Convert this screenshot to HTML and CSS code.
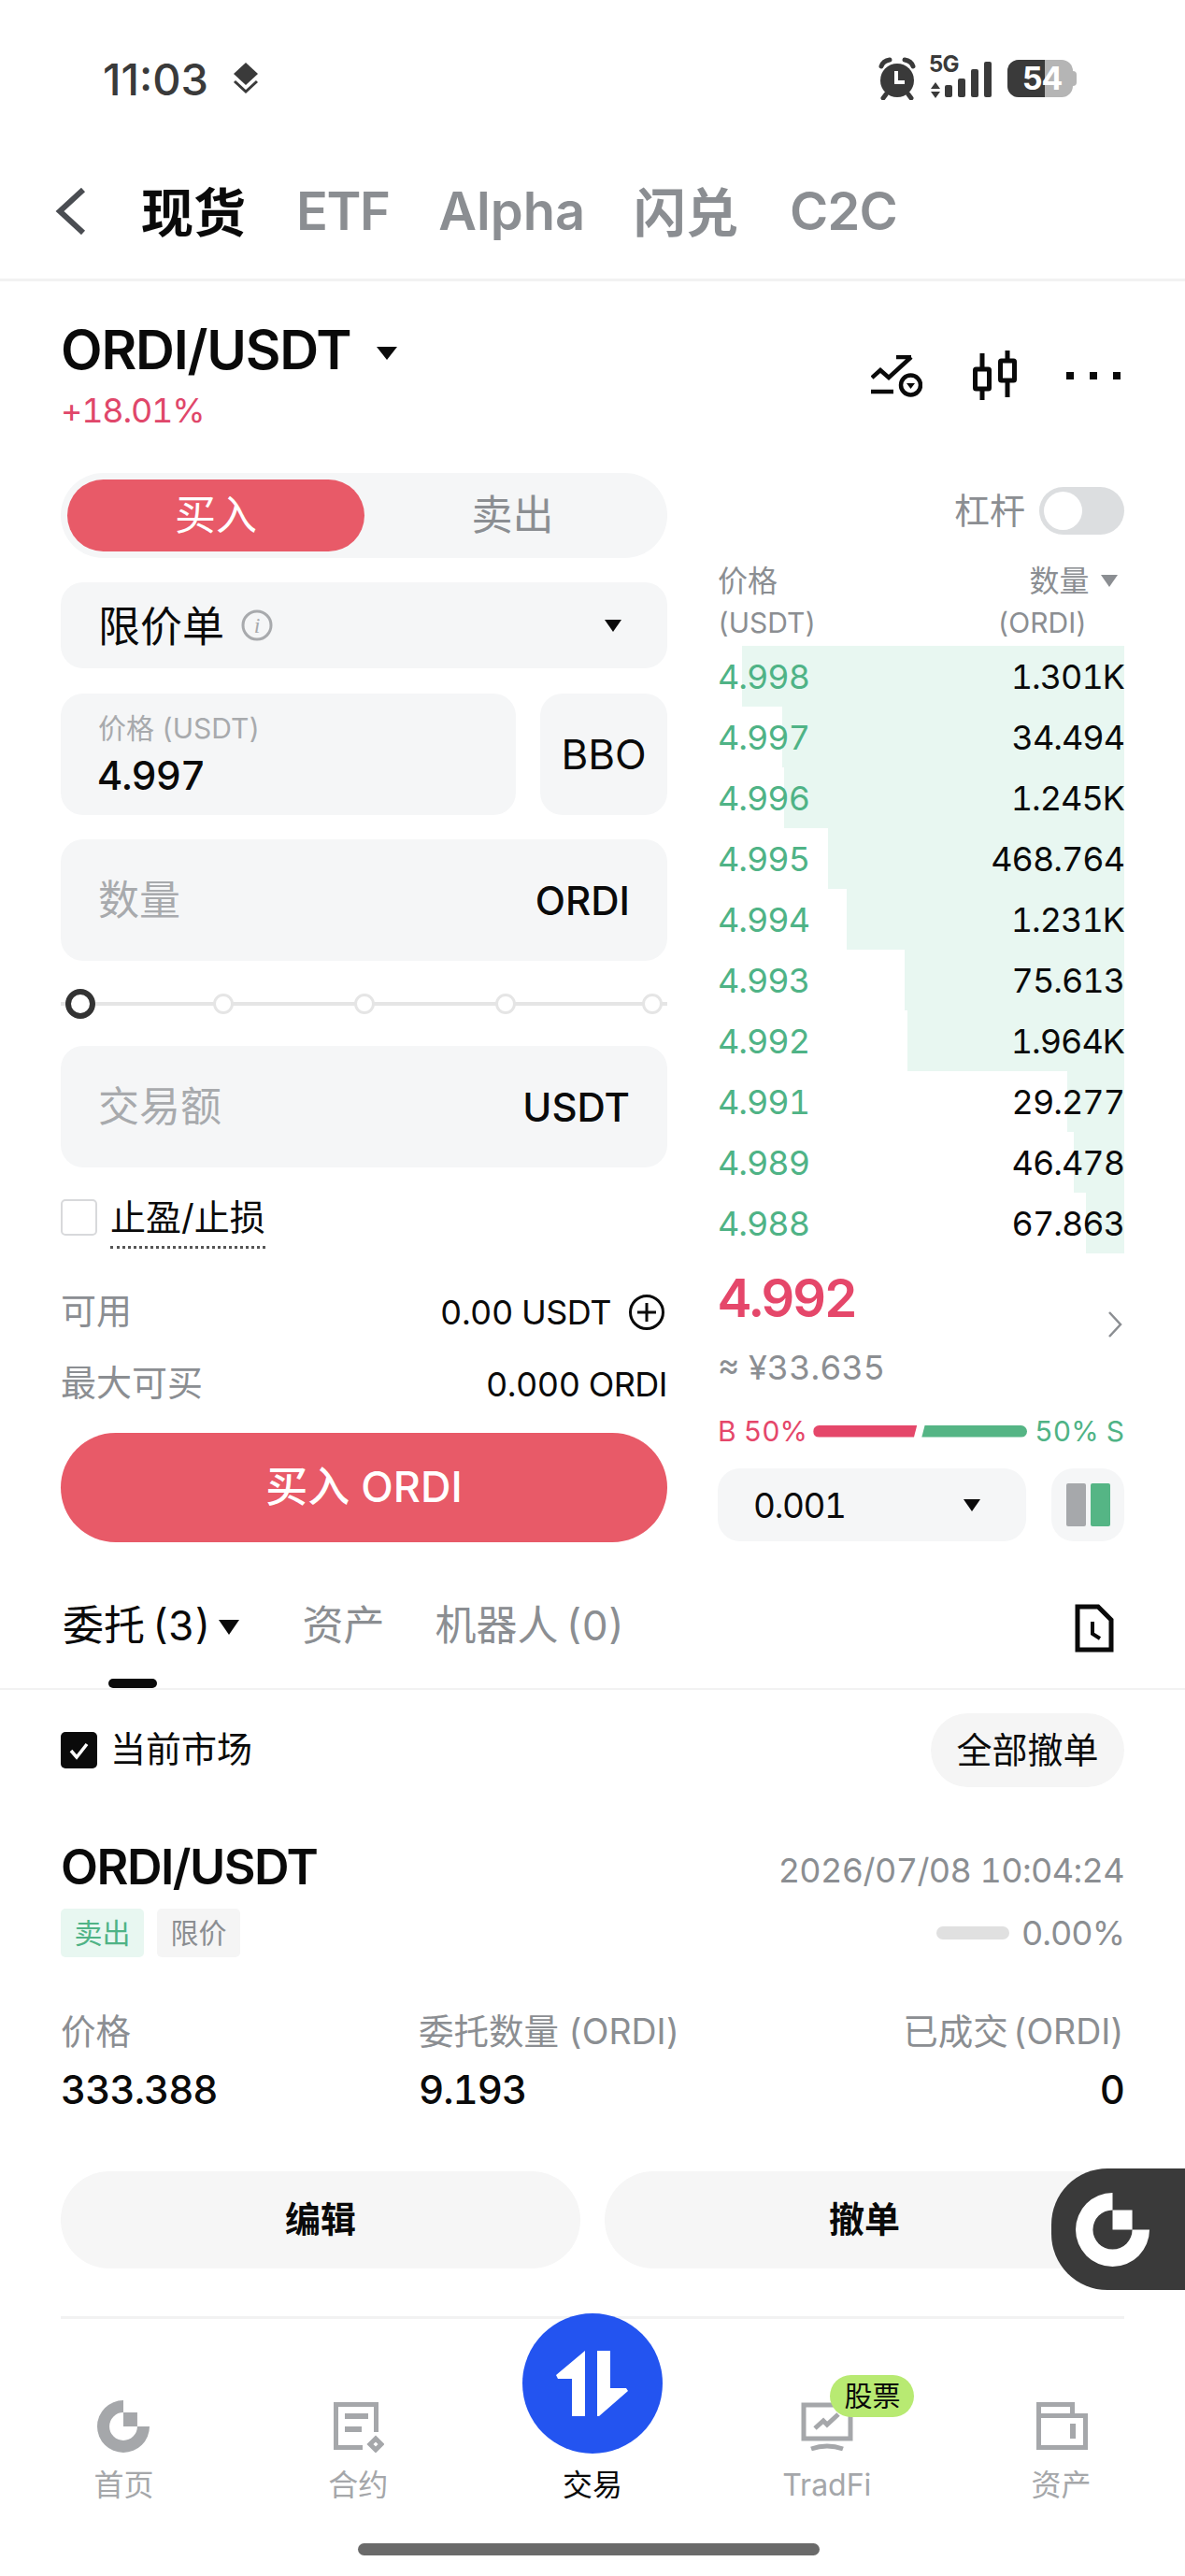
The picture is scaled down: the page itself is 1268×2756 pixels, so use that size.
FILE: index.html
```html
<!DOCTYPE html>
<html lang="zh-CN">

<head>
    <meta charset="UTF-8">
    <meta name="viewport" content="width=device-width, initial-scale=1.0">
    <title>ORDI/USDT 现货</title>
    <link rel="stylesheet" href="styles.css">
</head>

<body>
    <div class="page">
        <!-- Status bar -->
        <div class="status">
            <div class="status-left">
                <span class="clock">11:03</span>
                <svg class="layers" viewBox="0 0 32 34" width="32" height="34"><path fill="#3a3a3a" d="M16 0l13 12-13 12L3 12z"/><path fill="none" stroke="#3a3a3a" stroke-width="3" d="M4 20l12 11 12-11"/></svg>
            </div>
            <div class="status-right">
                <svg viewBox="0 0 40 46" width="40" height="46"><circle cx="20" cy="25" r="18" fill="#3a3a3a"/><path fill="none" stroke="#3a3a3a" stroke-width="5" stroke-linecap="round" d="M3 10q2-6 9-7M37 10q-2-6-9-7M8 40l-3 4M32 40l3 4"/><path fill="none" stroke="#fff" stroke-width="4" d="M19 15v12h9"/></svg>
                <div class="signal">
                    <span class="five-g">5G</span>
                    <svg viewBox="0 0 66 44" width="66" height="44"><path fill="#3a3a3a" d="M1 33l5-7 5 7zM1 36l5 7 5-7z"/><rect x="16" y="29" width="8" height="13" rx="2" fill="#3a3a3a"/><rect x="30" y="22" width="8" height="20" rx="2" fill="#3a3a3a"/><rect x="44" y="12" width="8" height="30" rx="2" fill="#3a3a3a"/><rect x="58" y="4" width="8" height="38" rx="2" fill="#3a3a3a"/></svg>
                </div>
                <div class="battery"><div class="battery-fill"></div><span class="battery-num">54</span></div>
            </div>
        </div>

        <!-- Top tabs -->
        <div class="topnav">
            <svg class="back" viewBox="0 0 34 50" width="34" height="50"><path fill="none" stroke="#4a4d52" stroke-width="6" d="M31 2L6 25l25 23"/></svg>
            <span class="topnav-item active">现货</span>
            <span class="topnav-item etf">ETF</span>
            <span class="topnav-item alpha">Alpha</span>
            <span class="topnav-item flash">闪兑</span>
            <span class="topnav-item c2c">C2C</span>
        </div>

        <!-- Pair header -->
        <div class="pair">
            <div>
                <div class="pair-name">ORDI/USDT <span class="caret pair-caret"></span></div>
                <div class="pair-change">+18.01%</div>
            </div>
            <div class="pair-icons">
                <svg viewBox="0 0 55 45" width="55" height="45" fill="none" stroke="#0a0a0a" stroke-width="4.5"><path d="M1 24l9-8 9 8L43 2M27 2h16M0 39h24"/><circle cx="42.5" cy="32" r="10.5"/><path fill="#0a0a0a" stroke="none" d="M38 30h9l-4.500 6z"/></svg>
                <svg viewBox="0 0 50 54" width="50" height="54" fill="none" stroke="#0a0a0a" stroke-width="5"><path d="M11 3v50M38 0v50"/><rect x="3.500" y="20" width="15" height="21" rx="1" fill="#fff"/><rect x="30.500" y="11" width="15" height="21" rx="1" fill="#fff"/></svg>
                <div class="dots"><i></i><i></i><i></i></div>
            </div>
        </div>

        <!-- Trade panel -->
        <div class="trade">
            <div class="form">
                <div class="side-toggle">
                    <div class="side active">买入</div>
                    <div class="side">卖出</div>
                </div>
                <div class="box type-box">
                    <span class="type-name">限价单</span>
                    <svg class="info" viewBox="0 0 34 34" width="34" height="34"><circle cx="17" cy="17" r="15" fill="none" stroke="#a8aaad" stroke-width="3"/><text x="17" y="25" text-anchor="middle" class="info-i">i</text></svg>
                    <span class="caret type-caret"></span>
                </div>
                <div class="price-row">
                    <div class="box price-box">
                        <div class="price-label">价格 (USDT)</div>
                        <div class="price-value">4.997</div>
                    </div>
                    <div class="box bbo">BBO</div>
                </div>
                <div class="box input-box">
                    <span class="placeholder">数量</span>
                    <span class="unit">ORDI</span>
                </div>
                <div class="slider">
                    <span class="knob"></span>
                    <span class="tick"></span>
                    <span class="tick"></span>
                    <span class="tick"></span>
                    <span class="tick"></span>
                </div>
                <div class="box input-box">
                    <span class="placeholder">交易额</span>
                    <span class="unit">USDT</span>
                </div>
                <div class="tp-row">
                    <span class="check-empty"></span>
                    <span class="tp-label">止盈/止损</span>
                </div>
                <div class="info-row avail">
                    <span class="muted">可用</span>
                    <span class="avail-val">0.00 USDT
                        <svg viewBox="0 0 40 40" width="40" height="40" fill="none" stroke="#0a0a0a" stroke-width="3"><circle cx="20" cy="20" r="17.500"/><path d="M20 10v20M10 20h20"/></svg>
                    </span>
                </div>
                <div class="info-row maxbuy">
                    <span class="muted">最大可买</span>
                    <span>0.000 ORDI</span>
                </div>
                <div class="buy-btn">买入 ORDI</div>
            </div>

            <div class="book">
                <div class="leverage">
                    <span class="leverage-label">杠杆</span>
                    <span class="switch"><i></i></span>
                </div>
                <div class="book-head">
                    <div>价格<br><small>(USDT)</small></div>
                    <div class="book-head-right">数量 <span class="caret head-caret"></span><br><small class="ordi-unit">(ORDI)</small></div>
                </div>
                <div class="row"><i class="depth" style="width:94%"></i><span class="bid">4.998</span><span>1.301K</span></div>
                <div class="row"><i class="depth" style="width:84.1%"></i><span class="bid">4.997</span><span>34.494</span></div>
                <div class="row"><i class="depth" style="width:83.7%"></i><span class="bid">4.996</span><span>1.245K</span></div>
                <div class="row"><i class="depth" style="width:72.9%"></i><span class="bid">4.995</span><span>468.764</span></div>
                <div class="row"><i class="depth" style="width:68.3%"></i><span class="bid">4.994</span><span>1.231K</span></div>
                <div class="row"><i class="depth" style="width:54%"></i><span class="bid">4.993</span><span>75.613</span></div>
                <div class="row"><i class="depth" style="width:53.3%"></i><span class="bid">4.992</span><span>1.964K</span></div>
                <div class="row"><i class="depth" style="width:14%"></i><span class="bid">4.991</span><span>29.277</span></div>
                <div class="row"><i class="depth" style="width:12.4%"></i><span class="bid">4.989</span><span>46.478</span></div>
                <div class="row"><i class="depth" style="width:9.4%"></i><span class="bid">4.988</span><span>67.863</span></div>
                <div class="last">
                    <div>
                        <div class="last-price">4.992</div>
                        <div class="last-cny">≈ ¥33.635</div>
                    </div>
                    <svg class="last-arrow" viewBox="0 0 18 30" width="18" height="30"><path fill="none" stroke="#8b8e92" stroke-width="2.500" d="M3 2l12 13L3 28"/></svg>
                </div>
                <div class="ratio">
                    <span class="ratio-b">B 50%</span>
                    <span class="bar-red"></span>
                    <span class="bar-green"></span>
                    <span class="ratio-s">50% S</span>
                </div>
                <div class="book-foot">
                    <div class="box step"><span>0.001</span><span class="caret step-caret"></span></div>
                    <div class="box layout-btn"><i class="col-gray"></i><i class="col-green"></i></div>
                </div>
            </div>
        </div>

        <!-- Orders -->
        <div class="tabs">
            <span class="tab active">委托 (3) <span class="caret tab-caret"></span><i class="tab-line"></i></span>
            <span class="tab assets-tab">资产</span>
            <span class="tab bot-tab">机器人 (0)</span>
            <svg class="history" viewBox="0 0 42 52" width="42" height="52" fill="none" stroke="#0a0a0a" stroke-width="5"><path d="M3 3h22l14 14v32H3z"/><path stroke-width="4" d="M19 19v13l8 5"/></svg>
        </div>
        <div class="market">
            <div class="market-left">
                <svg viewBox="0 0 39 39" width="39" height="39"><rect width="39" height="39" rx="5" fill="#0a0a0a"/><path fill="none" stroke="#fff" stroke-width="3.500" d="M11 20l6 7 11-14"/></svg>
                <span class="market-label">当前市场</span>
            </div>
            <div class="cancel-all">全部撤单</div>
        </div>
        <div class="order">
            <div class="order-top">
                <span class="order-pair">ORDI/USDT</span>
                <span class="muted order-date">2026/07/08 10:04:24</span>
            </div>
            <div class="order-sub">
                <div class="tags"><span class="tag tag-sell">卖出</span><span class="tag tag-type">限价</span></div>
                <div class="progress"><i></i><span class="muted">0.00%</span></div>
            </div>
            <div class="order-cols">
                <div><div class="muted col-label">价格</div><div class="col-val">333.388</div></div>
                <div><div class="muted col-label">委托数量 (ORDI)</div><div class="col-val">9.193</div></div>
                <div class="col-right"><div class="muted col-label">已成交 (ORDI)</div><div class="col-val">0</div></div>
            </div>
            <div class="order-btns">
                <div class="order-btn">编辑</div>
                <div class="order-btn">撤单</div>
            </div>
            <div class="divider"></div>
        </div>

        <!-- Floating logo -->
        <div class="float-logo">
            <svg viewBox="0 0 60 60" width="79" height="79"><path fill="#fff" d="M30 0A30 30 0 1 0 60 30H46A16 16 0 1 1 30 14zM30 14h16v16H30z"/></svg>
        </div>

        <!-- Bottom nav -->
        <div class="nav">
            <div class="nav-item">
                <svg viewBox="0 0 60 60" width="56" height="56"><path fill="#a5a7aa" d="M30 0A30 30 0 1 0 60 30H46A16 16 0 1 1 30 14zM30 14h16v16H30z"/></svg>
                <span>首页</span>
            </div>
            <div class="nav-item">
                <svg viewBox="0 0 56 56" width="56" height="56" fill="none" stroke="#a5a7aa" stroke-width="5"><path d="M33 50.500H4.500V4.500H47.500V34"/><path stroke-width="6" d="M14 17H39M14 31H32"/><path stroke-width="5" d="M47 41l6 6-6 6-6-6z"/></svg>
                <span>合约</span>
            </div>
            <div class="nav-item current">
                <div class="trade-fab">
                    <svg viewBox="0 0 77 70" width="77" height="70"><path fill="#fff" d="M31 0L0 26l2 4h15v40h14zM44 0h14v40h17l2 3-31 27h-2z"/></svg>
                </div>
                <span>交易</span>
            </div>
            <div class="nav-item">
                <span class="badge">股票</span>
                <svg viewBox="0 0 56 56" width="56" height="56" fill="none" stroke="#a5a7aa" stroke-width="5"><path d="M3 5h50v36H3z"/><path d="M11 52q17-6 34 0"/><path d="M15 30l9-8 4 4 12-11"/></svg>
                <span>TradFi</span>
            </div>
            <div class="nav-item">
                <svg viewBox="0 0 56 56" width="56" height="56" fill="none" stroke="#a5a7aa" stroke-width="5"><path d="M3.500 16.500V4.500H39.500V16.500M3.500 16.500H53.500V50.500H3.500z"/><path stroke-width="6" d="M40 25v16"/></svg>
                <span>资产</span>
            </div>
        </div>
        <div class="home-bar"></div>
    </div>
</body>

</html>
```

FILE: styles.css
```css
* {
    box-sizing: border-box;
}

body {
    margin: 0;
    background: #fff;
    color: #0a0a0a;
    font-family: Inter, "Noto Sans CJK SC", sans-serif;
    font-variant-numeric: tabular-nums;
}

.page {
    position: relative;
    display: flex;
    flex-direction: column;
    width: 1268px;
    height: 2756px;
    overflow: hidden;
    background: #fff;
}

.muted {
    color: #8b8e92;
}

.caret {
    display: inline-block;
    width: 0;
    height: 0;
    border-left: 9px solid transparent;
    border-right: 9px solid transparent;
    border-top: 13px solid #0a0a0a;
}

/* Status bar */
.status {
    display: flex;
    justify-content: space-between;
    align-items: center;
    height: 168px;
    padding: 0 116px 0 110px;
}

.status-left,
.status-right {
    display: flex;
    align-items: center;
}

.clock {
    font-size: 47px;
    font-weight: 500;
    font-variant-numeric: normal;
    color: #3a3a3a;
}

.layers {
    margin-left: 24px;
}

.signal {
    position: relative;
    width: 66px;
    height: 44px;
    margin-left: 15px;
}

.signal svg {
    display: block;
}

.five-g {
    position: absolute;
    left: -1px;
    top: -3px;
    font-size: 24px;
    line-height: 20px;
    font-weight: 700;
    letter-spacing: -1px;
    color: #3a3a3a;
}

.battery {
    position: relative;
    width: 70px;
    height: 40px;
    margin: 0 4px 0 17px;
    border-radius: 12px;
    background: #b5b5b5;
}

.battery::after {
    content: "";
    position: absolute;
    left: 70px;
    top: 12px;
    width: 4px;
    height: 16px;
    border-radius: 0 4px 4px 0;
    background: #b5b5b5;
}

.battery-fill {
    width: 40px;
    height: 40px;
    border-radius: 12px 0 0 12px;
    background: #3a3a3a;
}

.battery-num {
    position: absolute;
    left: 16px;
    top: 0;
    font-size: 34px;
    line-height: 40px;
    font-weight: 700;
    letter-spacing: -1px;
    color: #fff;
}

/* Top tabs */
.topnav {
    display: flex;
    align-items: center;
    height: 133px;
    padding: 0 0 14px 58px;
    border-bottom: 3px solid #f2f2f2;
}

.topnav-item {
    font-size: 56px;
    font-weight: 600;
    color: #8b8e92;
    white-space: nowrap;
}

.topnav-item.active {
    margin-left: 59px;
    margin-bottom: 6px;
    color: #0a0a0a;
    font-weight: 700;
}

.etf {
    margin-left: 54px;
    letter-spacing: -1.5px;
}

.alpha {
    margin-left: 53px;
}

.flash {
    margin-left: 52px;
    margin-bottom: 6px;
}

.c2c {
    margin-left: 55px;
    letter-spacing: -1.5px;
}

/* Pair header */
.pair {
    display: flex;
    justify-content: space-between;
    height: 205px;
    padding: 43px 69px 0 65px;
}

.pair-name {
    font-size: 58px;
    line-height: 60px;
    font-weight: 600;
    letter-spacing: -1.2px;
    white-space: nowrap;
}

.pair-caret {
    margin-left: 13px;
    vertical-align: 10px;
    border-left-width: 11px;
    border-right-width: 11px;
    border-top-width: 14px;
}

.pair-change {
    margin-top: 15px;
    font-size: 36px;
    line-height: 40px;
    letter-spacing: -1.2px;
    color: #e0476a;
}

.pair-icons {
    display: flex;
    align-items: center;
    height: 60px;
    margin-top: 28px;
}

.pair-icons svg:nth-child(2) {
    margin-left: 53px;
}

.dots {
    display: flex;
    gap: 17px;
    margin-left: 51px;
}

.dots i {
    width: 8px;
    height: 8px;
    background: #0a0a0a;
}

/* Trade panel */
.trade {
    display: flex;
    gap: 54px;
    padding: 0 65px;
}

.form {
    width: 649px;
}

.box {
    border-radius: 24px;
    background: #f5f6f7;
}

.side-toggle {
    display: flex;
    height: 91px;
    padding: 7px;
    border-radius: 46px;
    background: #f5f6f7;
}

.side {
    flex: 1;
    font-size: 44px;
    line-height: 77px;
    text-align: center;
    color: #8b8e92;
    border-radius: 39px;
}

.side.active {
    flex: 0 0 318px;
    background: #e85a68;
    color: #fff;
}

.type-box {
    display: flex;
    align-items: center;
    height: 92px;
    margin-top: 26px;
    padding: 0 49px 0 40px;
}

.type-name {
    padding-bottom: 4px;
    font-size: 45px;
}

.info {
    margin-left: 18px;
}

.info-i {
    font-family: "Liberation Serif", serif;
    font-style: italic;
    font-size: 24px;
    fill: #a8aaad;
}

.type-caret {
    margin-left: auto;
}

.price-row {
    display: flex;
    gap: 26px;
    margin-top: 27px;
}

.price-box {
    flex: 1;
    height: 130px;
    padding: 17px 40px 0;
}

.price-label {
    font-size: 30px;
    line-height: 40px;
    color: #a8aaad;
}

.price-value {
    margin: 4px 0 0 -1px;
    font-size: 42px;
    line-height: 54px;
    font-weight: 500;
    letter-spacing: -1px;
}

.bbo {
    flex: 0 0 136px;
    font-size: 44px;
    line-height: 130px;
    text-align: center;
}

.input-box {
    display: flex;
    justify-content: space-between;
    align-items: center;
    height: 130px;
    margin-top: 26px;
    padding: 0 40px;
}

.placeholder {
    padding-bottom: 6px;
    font-size: 44px;
    color: #a8aaad;
}

.unit {
    font-size: 42px;
    font-weight: 500;
}

.slider {
    position: relative;
    display: flex;
    align-items: center;
    height: 91px;
    padding-left: 5px;
    background: linear-gradient(#e5e5e5, #e5e5e5) center / 100% 4px no-repeat;
}

.slider + .input-box {
    margin-top: 0;
}

.knob {
    width: 32px;
    height: 32px;
    border: 6px solid #333;
    border-radius: 50%;
    background: #fff;
}

.tick {
    width: 22px;
    height: 22px;
    margin-left: 129px;
    border: 3px solid #e5e5e5;
    border-radius: 50%;
    background: #fff;
}

.knob + .tick {
    margin-left: 126px;
}

.tick:last-child {
    margin-left: 135px;
}

.tp-row {
    display: flex;
    align-items: center;
    gap: 14px;
    height: 40px;
    margin-top: 33px;
}

.check-empty {
    width: 39px;
    height: 39px;
    border: 2px solid #d8d9db;
    border-radius: 5px;
}

.tp-label {
    padding-bottom: 6px;
    font-size: 38px;
    line-height: 50px;
    margin-top: 8px;
    border-bottom: 3px dotted #555;
}

.info-row {
    display: flex;
    justify-content: space-between;
    align-items: center;
    height: 44px;
    font-size: 36px;
    letter-spacing: -0.5px;
    white-space: nowrap;
}

.info-row .muted {
    padding-bottom: 9px;
    font-size: 38px;
    letter-spacing: 0;
}

.avail {
    margin-top: 60px;
}

.avail-val {
    display: flex;
    align-items: center;
    gap: 18px;
    margin-right: 2px;
}

.maxbuy {
    margin-top: 33px;
}

.buy-btn {
    height: 117px;
    margin-top: 30px;
    padding-bottom: 2px;
    border-radius: 59px;
    background: #e85a68;
    color: #fff;
    font-size: 45px;
    font-weight: 500;
    line-height: 115px;
    text-align: center;
}

/* Order book */
.book {
    width: 435px;
    padding-top: 15px;
}

.leverage {
    display: flex;
    justify-content: flex-end;
    align-items: center;
    gap: 15px;
    height: 51px;
    font-size: 38px;
    color: #8b8e92;
}

.leverage-label {
    padding-bottom: 6px;
}

.switch {
    display: block;
    width: 91px;
    height: 51px;
    padding: 5px;
    border-radius: 26px;
    background: #dcdee0;
}

.switch i {
    display: block;
    width: 41px;
    height: 41px;
    border-radius: 50%;
    background: #fff;
}

.book-head {
    display: flex;
    justify-content: space-between;
    height: 91px;
    margin: 28px 0 0;
    font-size: 32px;
    line-height: 44px;
    color: #8b8e92;
}

.book-head small {
    font-size: 30px;
}

.book-head-right {
    margin-right: 7px;
    text-align: right;
}

.ordi-unit {
    margin-right: 33px;
}

.head-caret {
    margin-left: 4px;
    vertical-align: 5px;
    border-top-color: #8b8e92;
}

.row {
    position: relative;
    display: flex;
    justify-content: space-between;
    align-items: center;
    height: 65px;
    font-size: 36px;
    letter-spacing: -1px;
}

.row span {
    position: relative;
}

.depth {
    position: absolute;
    top: 0;
    right: 0;
    bottom: 0;
    background: #e8f7f1;
}

.bid {
    color: #4fb386;
}

.last {
    display: flex;
    justify-content: space-between;
    align-items: center;
    padding-top: 13px;
}

.last-price {
    font-size: 56px;
    line-height: 70px;
    font-weight: 600;
    letter-spacing: -2.5px;
    color: #e5476a;
}

.last-cny {
    margin-top: 14px;
    font-size: 36px;
    line-height: 50px;
    color: #8b8e92;
}

.last-arrow {
    margin: 0 1px 8px 0;
}

.ratio {
    display: flex;
    align-items: center;
    height: 36px;
    margin-top: 25px;
    font-size: 30px;
    white-space: nowrap;
}

.ratio-b {
    flex: 1;
    color: #e5476a;
}

.ratio-s {
    margin-left: 8px;
    color: #4fb386;
}

.bar-red {
    width: 111px;
    height: 13px;
    border-radius: 7px 0 0 7px;
    background: #e5476a;
    clip-path: polygon(0 0, 100% 0, 97% 100%, 0 100%);
}

.bar-green {
    width: 113px;
    height: 13px;
    margin-left: 5px;
    border-radius: 0 7px 7px 0;
    background: #55b585;
    clip-path: polygon(3% 0, 100% 0, 100% 100%, 0 100%);
}

.book-foot {
    display: flex;
    justify-content: space-between;
    height: 78px;
    margin-top: 22px;
}

.step {
    display: flex;
    justify-content: space-between;
    align-items: center;
    width: 330px;
    padding: 0 49px 0 38px;
    font-size: 37px;
    letter-spacing: -1.5px;
}

.layout-btn {
    display: flex;
    justify-content: center;
    align-items: center;
    gap: 5px;
    width: 78px;
}

.col-gray,
.col-green {
    width: 21px;
    height: 46px;
    border-radius: 2px;
    background: #a6a8ab;
}

.col-green {
    background: #55b585;
}

/* Orders */
.tabs {
    position: relative;
    display: flex;
    align-items: flex-start;
    height: 158px;
    padding: 59px 0 0 67px;
    border-bottom: 2px solid #f2f2f2;
}

.tab {
    font-size: 44px;
    line-height: 60px;
    color: #8b8e92;
    word-spacing: -4px;
    white-space: nowrap;
}

.tab.active {
    color: #0a0a0a;
}

.tab-caret {
    margin-left: 0;
    vertical-align: 6px;
    border-left-width: 11px;
    border-right-width: 11px;
    border-top-width: 16px;
}

.tab-line {
    position: absolute;
    left: 116px;
    bottom: 0;
    width: 52px;
    height: 10px;
    border-radius: 5px;
    background: #0a0a0a;
}

.assets-tab {
    margin-left: 68px;
}

.bot-tab {
    margin-left: 54px;
}

.history {
    margin: 7px 76px 0 auto;
}

.market {
    display: flex;
    justify-content: space-between;
    align-items: center;
    height: 79px;
    margin-top: 25px;
    padding: 0 65px;
    font-size: 38px;
}

.market-left {
    display: flex;
    align-items: center;
    gap: 14px;
}

.market-label {
    padding-bottom: 8px;
}

.cancel-all {
    width: 207px;
    border-radius: 40px;
    background: #f5f5f5;
    line-height: 79px;
    text-align: center;
}

.order {
    padding: 0 65px;
}

.order-top {
    display: flex;
    justify-content: space-between;
    align-items: center;
    height: 60px;
    margin-top: 55px;
}

.order-pair {
    font-size: 52px;
    font-weight: 600;
    letter-spacing: -1.5px;
}

.order-date {
    margin-top: 8px;
    font-size: 36px;
    letter-spacing: -0.6px;
}

.order-sub {
    display: flex;
    justify-content: space-between;
    align-items: center;
    height: 52px;
    margin-top: 15px;
}

.tags {
    display: flex;
    gap: 14px;
}

.tag {
    width: 89px;
    border-radius: 5px;
    font-size: 30px;
    line-height: 52px;
    text-align: center;
}

.tag-sell {
    background: #e8f7f1;
    color: #4fb386;
}

.tag-type {
    background: #f5f5f5;
    color: #8b8e92;
}

.progress {
    display: flex;
    align-items: center;
    gap: 13px;
    font-size: 36px;
    letter-spacing: -1px;
}

.progress i {
    width: 78px;
    height: 14px;
    border-radius: 7px;
    background: #e0e0e0;
}

.order-cols {
    display: grid;
    grid-template-columns: 383px 1fr auto;
    margin-top: 51px;
}

.col-label {
    font-size: 37.5px;
    line-height: 58px;
}

.col-val {
    margin-top: 1px;
    font-size: 42px;
    line-height: 64px;
    font-weight: 500;
    letter-spacing: -1px;
}

.col-right {
    text-align: right;
    word-spacing: -5px;
}

.order-btns {
    display: flex;
    gap: 26px;
    margin-top: 55px;
}

.order-btn {
    flex: 1;
    height: 104px;
    padding-bottom: 2px;
    border-radius: 52px;
    background: #f6f6f6;
    font-size: 38px;
    font-weight: 700;
    line-height: 102px;
    text-align: center;
}

.divider {
    height: 3px;
    margin-top: 51px;
    background: #f2f2f2;
}

.float-logo {
    position: absolute;
    left: 1125px;
    top: 2320px;
    display: flex;
    align-items: center;
    width: 143px;
    height: 130px;
    padding-left: 26px;
    border-radius: 60px 0 0 60px;
    background: #3a3a3a;
}

/* Bottom nav */
.nav {
    display: grid;
    grid-template-columns: repeat(5, 1fr);
    padding: 87px 7px 0;
}

.nav-item {
    position: relative;
    display: flex;
    flex-direction: column;
    align-items: center;
    font-size: 32px;
    color: #a5a7aa;
}

.nav-item span:last-child {
    margin-top: 13px;
    line-height: 44px;
}

.nav-item.current {
    justify-content: flex-end;
    color: #0a0a0a;
}

.trade-fab {
    position: absolute;
    left: 50%;
    top: -93px;
    display: flex;
    justify-content: center;
    align-items: center;
    width: 150px;
    height: 150px;
    margin-left: -75px;
    border-radius: 50%;
    background: #2354f0;
}

.badge {
    position: absolute;
    left: 129px;
    top: -27px;
    width: 90px;
    border-radius: 23px;
    background: #b8ea72;
    color: #0a0a0a;
    font-size: 30px;
    line-height: 45px;
    text-align: center;
}

.home-bar {
    width: 494px;
    height: 13px;
    margin: 40px 0 0 383px;
    border-radius: 7px;
    background: #6a6a6a;
}
```
